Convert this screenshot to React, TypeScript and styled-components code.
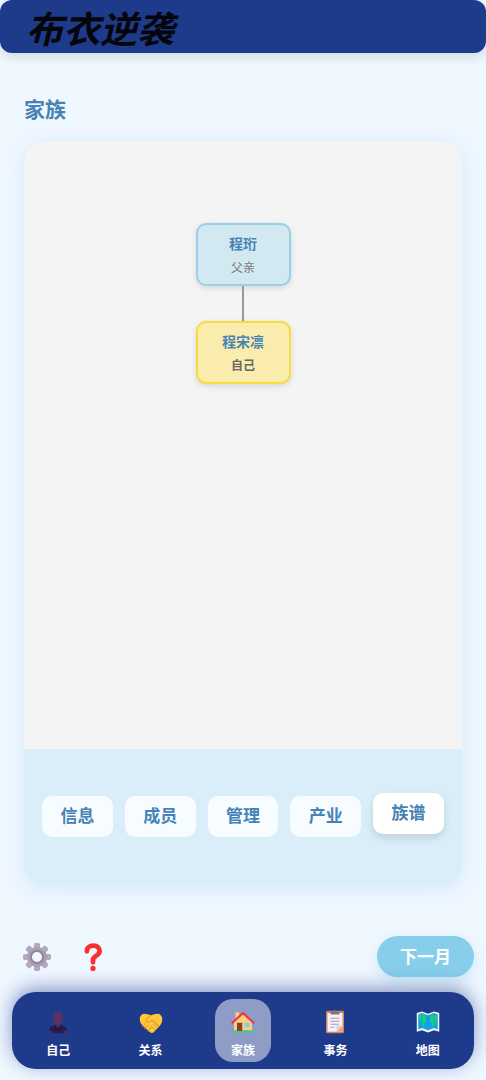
import React, { useState } from "react";
import styled, { createGlobalStyle } from "styled-components";

const GlobalStyle = createGlobalStyle`
  *, *::before, *::after { box-sizing: border-box; }
  body {
    margin: 0;
    background: #f0f8ff;
    font-family: "Noto Sans", "Noto Sans CJK SC", sans-serif;
  }
  button { font-family: inherit; border: 0; padding: 0; cursor: pointer; }
`;

const Page = styled.div`
  display: flex;
  flex-direction: column;
  min-height: 100vh;
  background: #eff7ff;
`;

const Header = styled.header`
  display: flex;
  align-items: center;
  height: 53px;
  padding: 0 26px;
  border-radius: 12px;
  background: #1e3a8a;
  box-shadow: 0 4px 12px rgba(0, 0, 0, 0.12);
`;

const Logo = styled.div`
  font-family: "Noto Sans CJK SC", sans-serif;
  font-size: 37px;
  line-height: 56px;
  font-weight: 700;
  font-style: italic;
  white-space: nowrap;
  color: #05060c;
`;

const Main = styled.main`
  display: flex;
  flex-direction: column;
  flex: 1;
  padding: 40px 24px 0;
`;

const Title = styled.h1`
  margin: 0 0 16px;
  font-size: 21px;
  line-height: 32px;
  font-weight: 700;
  color: #4682b4;
`;

const Card = styled.section`
  display: flex;
  flex-direction: column;
  flex: 1;
  border-radius: 20px;
  overflow: hidden;
  background: #d9eef9;
  box-shadow: 0 4px 20px rgba(135, 206, 250, 0.28);
`;

const Tree = styled.div`
  display: flex;
  flex-direction: column;
  align-items: center;
  flex: 1;
  padding: 82px 16px;
  background: #f4f4f4;
`;

const Person = styled.div<{ $self?: boolean }>`
  display: flex;
  flex-direction: column;
  align-items: center;
  gap: 4px;
  width: 95px;
  height: 63px;
  padding-top: 9px;
  border: 2px solid ${(p) => (p.$self ? "#fadb3c" : "#98d0e9")};
  border-radius: 10px;
  background: ${(p) => (p.$self ? "#f9ecad" : "#d3e9f2")};
  box-shadow: 0 2px 6px rgba(0, 0, 0, 0.12);
`;

const PersonName = styled.strong`
  font-size: 14px;
  line-height: 20px;
  font-weight: 700;
  color: #4682b4;
`;

const Relation = styled.span<{ $self?: boolean }>`
  font-size: 12px;
  line-height: 20px;
  font-weight: ${(p) => (p.$self ? 700 : 400)};
  color: ${(p) => (p.$self ? "#666" : "#777")};
`;

const Connector = styled.div`
  width: 2px;
  height: 35px;
  background: #999;
`;

const Tabs = styled.div`
  display: grid;
  grid-template-columns: repeat(5, 1fr);
  gap: 12px;
  align-content: center;
  height: 136px;
  padding: 0 18px 2px;
`;

const Tab = styled.button<{ $active: boolean }>`
  height: 41px;
  border-radius: 10px;
  background: ${(p) => (p.$active ? "#fff" : "#f6fcff")};
  color: #4682b4;
  font-size: 17px;
  line-height: 24px;
  font-weight: 700;
  transform: ${(p) => (p.$active ? "translateY(-3px)" : "none")};
  box-shadow: ${(p) => (p.$active ? "0 4px 8px rgba(0, 0, 0, 0.12)" : "none")};
`;

const Actions = styled.div`
  display: flex;
  align-items: center;
  gap: 28px;
  padding: 51px 12px 15px 23px;
`;

const IconButton = styled.button`
  display: flex;
  width: 28px;
  height: 28px;
  background: none;
`;

const NextButton = styled.button`
  width: 97px;
  height: 41px;
  margin-left: auto;
  border-radius: 21px;
  background: #87ceeb;
  color: #fff;
  font-size: 17px;
  line-height: 24px;
  font-weight: 700;
  box-shadow: 0 4px 12px rgba(135, 206, 235, 0.35);
`;

const Nav = styled.nav`
  display: grid;
  grid-template-columns: repeat(5, 1fr);
  justify-items: center;
  align-items: center;
  height: 77px;
  margin: 0 12px 11px;
  border-radius: 24px;
  background: #1e3a8a;
  box-shadow: 0 -4px 18px rgba(30, 58, 138, 0.5);
`;

const NavItem = styled.button<{ $active: boolean }>`
  display: flex;
  flex-direction: column;
  align-items: center;
  gap: 8px;
  width: 56px;
  height: 63px;
  padding-top: 11px;
  border-radius: 18px;
  background: ${(p) => (p.$active ? "#8f9cc5" : "transparent")};
  color: #fff;
  font-size: 12px;
  line-height: 18px;
  font-weight: 700;
`;

const Icon = ({ size = 24, children }: { size?: number; children: React.ReactNode }) => (
  <svg width={size} height={size} viewBox="0 0 32 32" aria-hidden="true">
    {children}
  </svg>
);

const SelfIcon = () => (
  <Icon>
    <path d="M4 31v-4c0-4 3-6 7-6.500h10c4 .5 7 2.500 7 6.500v4z" fill="#2b1c50" />
    <path d="M4 31v-3h4v3zM24 31v-3h4v3z" fill="#553062" />
    <path d="M13 16h6v6l-3 3-3-3z" fill="#4d2c5a" />
    <path d="M16 2c5 0 7 3 7 8 0 6-3 10-7 10s-7-4-7-10c0-5 2-8 7-8z" fill="#573464" />
    <path d="m12 20 4 5 4-5 1 4-5 4-5-4z" fill="#23153d" />
  </Icon>
);

const HandshakeIcon = () => (
  <Icon>
    <path d="M1 12c0-4 3-7 6-7 3 0 6 1 9 2 3-1 6-2 9-2 3 0 6 3 6 7 0 5-2 8-5 11l-5 5c-2 3-4 3-6 2L5 21c-3-3-4-6-4-9z" fill="#ffc83d" />
    <path d="M16 7l-6 5c-2 2 0 5 3 4l5-2 8 7M8 18l-3 4M12 20l-4 5M16 23l-4 5M20 19l4 4M17 22l4 4" fill="none" stroke="#e59a22" strokeWidth="1.400" strokeLinecap="round" strokeLinejoin="round" />
  </Icon>
);

const HouseIcon = () => (
  <Icon>
    <path d="M6 3h5v8H6z" fill="#ffce7c" />
    <path d="M16 4 4 15v13h24V15z" fill="#ffce7c" />
    <path d="M1 27h30v3H1z" fill="#44c98b" />
    <path d="M8 17h7v11H8z" fill="#7d4533" />
    <path d="M18 17h7v6h-7z" fill="#80cfef" />
    <path d="M2 17 16 4l14 13" fill="none" stroke="#ee3442" strokeWidth="2.800" strokeLinecap="round" strokeLinejoin="round" />
  </Icon>
);

const ClipboardIcon = () => (
  <Icon>
    <rect x="4" y="1" width="24" height="30" rx="2" fill="#d0835d" />
    <path d="M6 4h20v25H6z" fill="#f4eff9" />
    <path d="M26 21v8h-8z" fill="#f3a05f" />
    <path d="M18 21h8l-8 8z" fill="#dccfdf" />
    <path d="M10 2h3c0-2 6-2 6 0h3v4H10z" fill="#7f7888" />
    <path d="M10 11h12M10 15h12M10 19h11M10 23h5" stroke="#a79ab0" strokeWidth="1.300" />
  </Icon>
);

const MapIcon = () => (
  <Icon>
    <path d="m1 4 7-2 8 3 8-3 7 2v25l-7-2-8 3-8-3-7 2z" fill="#f4f4f6" />
    <path d="m3 6 5-2 8 3 8-3 5 2v20l-5-2-8 3-8-3-5 2z" fill="#10a5e9" />
    <path d="m4 7 6-2 4 3-2 4 2 3-4 2 1 6-3-2-1-6-3-3zM18 9l5-3 5 2-1 5 1 3-3 1v6l-3-1-1-6-3-2 2-3z" fill="#1dcf7c" />
    <path d="M8 4v20M16 7v20M24 4v20" stroke="#087da8" strokeWidth="1" opacity=".4" />
  </Icon>
);

const GearIcon = () => (
  <Icon size={28}>
    <g fill="#b4a9bf">
      {[0, 45, 90, 135].map((angle) => (
        <rect key={angle} x="12.500" y="0" width="7" height="32" rx="2" transform={`rotate(${angle} 16 16)`} />
      ))}
    </g>
    <circle cx="16" cy="16" r="11.500" fill="#aca0b5" />
    <circle cx="16" cy="16" r="7" fill="#eff7ff" stroke="#93869f" strokeWidth="2.500" />
  </Icon>
);

const QuestionIcon = () => (
  <Icon size={28}>
    <path d="M9 9.500c0-4 3-6.500 7.500-6.500 4.500 0 7 3 7 6.500 0 5-7.500 5.500-7.500 9.500v3" fill="none" stroke="#f8312f" strokeWidth="5.500" strokeLinecap="round" strokeLinejoin="round" />
    <circle cx="16" cy="29" r="3" fill="#f8312f" />
  </Icon>
);

const tabs = ["信息", "成员", "管理", "产业", "族谱"];

const navItems = [
  { label: "自己", icon: <SelfIcon /> },
  { label: "关系", icon: <HandshakeIcon /> },
  { label: "家族", icon: <HouseIcon /> },
  { label: "事务", icon: <ClipboardIcon /> },
  { label: "地图", icon: <MapIcon /> },
];

export default function App() {
  const [tab, setTab] = useState("族谱");
  const [section, setSection] = useState("家族");

  return (
    <Page lang="zh-CN">
      <GlobalStyle />
      <Header>
        <Logo>布衣逆袭</Logo>
      </Header>
      <Main>
        <Title>家族</Title>
        <Card>
          <Tree>
            <Person>
              <PersonName>程珩</PersonName>
              <Relation>父亲</Relation>
            </Person>
            <Connector />
            <Person $self>
              <PersonName>程宋凛</PersonName>
              <Relation $self>自己</Relation>
            </Person>
          </Tree>
          <Tabs>
            {tabs.map((name) => (
              <Tab key={name} type="button" $active={name === tab} onClick={() => setTab(name)}>
                {name}
              </Tab>
            ))}
          </Tabs>
        </Card>
      </Main>
      <Actions>
        <IconButton type="button" aria-label="设置">
          <GearIcon />
        </IconButton>
        <IconButton type="button" aria-label="帮助">
          <QuestionIcon />
        </IconButton>
        <NextButton type="button">下一月</NextButton>
      </Actions>
      <Nav>
        {navItems.map(({ label, icon }) => (
          <NavItem key={label} type="button" $active={label === section} onClick={() => setSection(label)}>
            {icon}
            {label}
          </NavItem>
        ))}
      </Nav>
    </Page>
  );
}
